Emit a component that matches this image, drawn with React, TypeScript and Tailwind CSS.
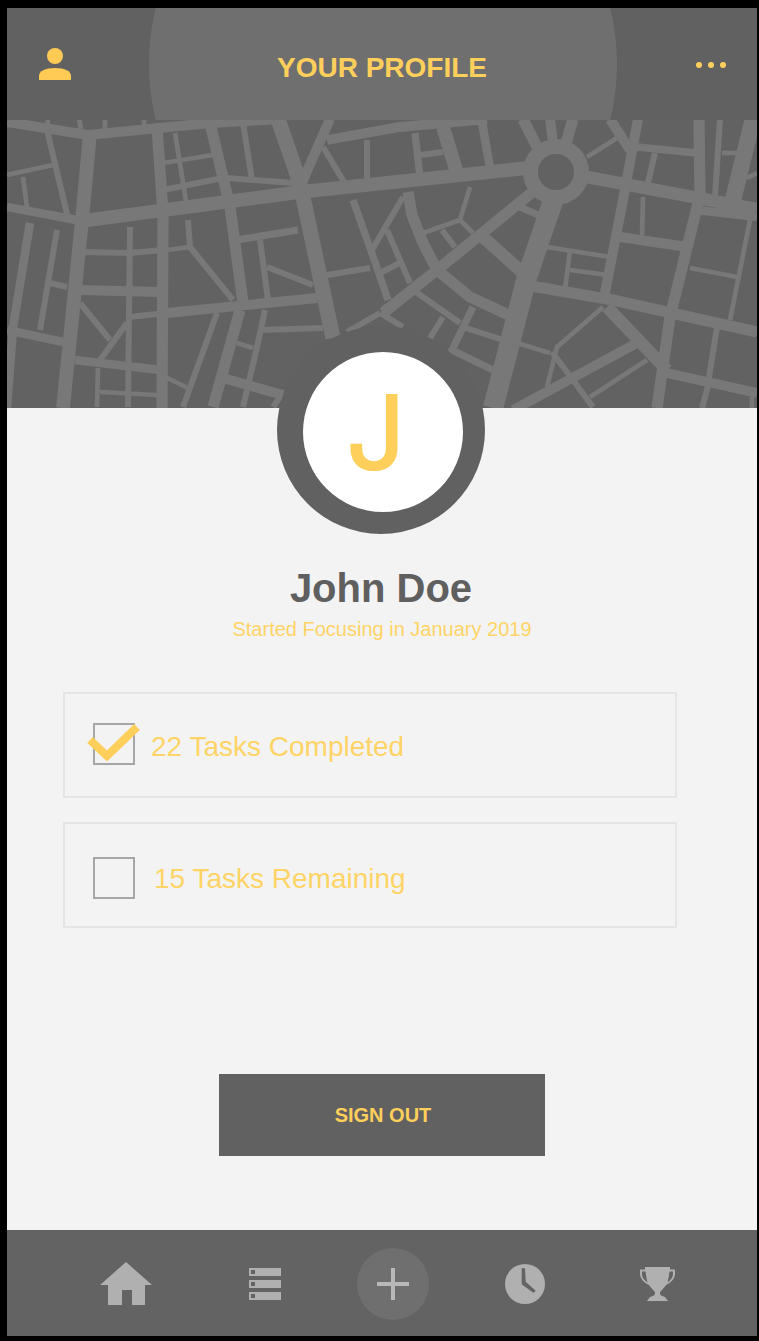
const ROADS: [string, number][] = [
  // top left blocks
  ['7,122 88,135 210,123 285,119', 7],
  ['90,133 82,220 63,408', 10],
  ['47,130 68,218', 4],
  ['7,175 53,165', 3],
  ['23,177 27,208', 3],
  ['7,207 82,221', 6],
  ['48,119 47,127', 3],
  ['79,119 81,129', 3],
  ['105,119 105,129', 3],
  ['144,119 144,127', 3],
  ['157,127 163,213 162,408', 8],
  ['210,123 230,207 243,303', 8],
  ['243,123 252,180', 4],
  ['227,178 293,183', 4],
  ['278,119 300,183 333,338', 11],
  ['330,119 300,187', 7],
  ['323,147 347,187', 4],
  ['327,140 400,127 487,119', 7],
  ['367,140 367,187', 4],
  ['175,133 187,207', 3],
  ['163,163 213,155', 3],
  ['163,190 223,178', 4],
  ['353,200 375,262 388,300', 5],
  // main east-west road
  ['82,221 300,192 537,167', 10],
  ['587,177 757,209', 9],
  // lower left
  ['30,223 13,327 7,408', 6],
  ['57,230 40,330', 4],
  ['50,283 67,287', 4],
  ['7,330 63,342', 6],
  ['83,252 130,253 163,250', 4],
  ['130,227 128,407', 4],
  ['80,290 160,292', 7],
  ['167,250 190,247', 3],
  ['188,220 190,247 233,300', 4],
  ['128,317 167,313', 4],
  ['167,313 317,298', 7],
  ['80,303 110,340', 4],
  ['127,323 100,360', 4],
  ['75,360 160,370', 6],
  ['98,368 97,407', 3],
  ['100,392 157,395', 3],
  ['165,377 188,388', 3],
  ['217,313 183,407', 4],
  ['240,310 213,407', 8],
  ['237,240 298,230', 5],
  ['260,240 268,300', 4],
  ['267,267 313,285', 4],
  ['327,275 370,268', 4],
  ['265,310 257,347 243,407', 4],
  ['260,330 323,328', 4],
  ['237,343 253,348', 3],
  ['223,378 283,395', 7],
  ['283,393 273,407', 4],
  ['347,332 380,313', 4],
  // centre
  ['408,192 412,215 423,243 437,270 470,297 513,317', 8],
  ['535,190 437,270 383,313', 8],
  ['483,237 523,273', 9],
  ['555,195 527,277 493,408', 15],
  ['387,230 410,283', 4],
  ['380,273 400,263', 4],
  ['423,233 460,220 473,233', 3],
  ['442,230 455,247', 4],
  ['460,220 470,187', 3],
  ['413,290 460,323', 4],
  ['443,317 430,338', 4],
  ['473,307 452,350 493,370', 5],
  ['463,327 503,340', 4],
  ['380,313 403,327', 4],
  ['403,197 372,250', 4],
  ['520,207 545,218', 5],
  ['415,133 420,177', 5],
  ['420,155 443,152', 4],
  ['443,127 457,173', 10],
  ['482,122 490,168', 6],
  // roundabout spokes
  ['523,119 537,147', 8],
  ['550,119 553,143', 7],
  ['573,119 565,147', 8],
  ['587,157 617,138', 3],
  ['610,119 630,150', 7],
  // right side
  ['517,343 550,353', 3],
  ['547,247 610,257', 3],
  ['570,250 565,290', 3],
  ['570,270 607,275', 3],
  ['525,285 613,300 757,332', 8],
  ['638,119 623,200 603,303', 7],
  ['603,307 557,347 547,387', 3],
  ['607,307 667,370', 9],
  ['552,352 593,407', 4],
  ['637,343 513,410', 7],
  ['647,360 590,397', 3],
  ['643,197 642,237', 3],
  ['620,237 687,247', 7],
  ['700,195 670,317 657,408', 8],
  ['690,268 737,277', 3],
  ['750,220 730,320', 3],
  ['697,210 757,217', 6],
  ['717,327 707,390 702,408', 4],
  ['667,373 757,393', 7],
  ['752,397 752,408', 3],
  ['637,147 697,153', 5],
  ['655,153 647,187', 4],
  ['699,119 700,195', 8],
  ['720,119 715,197', 4],
  ['722,153 738,153', 3],
  ['753,119 733,200', 12],
  ['747,178 757,173', 3],
];

function CityMap() {
  return (
    <svg viewBox="7 120 750 288" className="block h-[288px] w-[750px]">
      <rect x="7" y="120" width="750" height="288" fill="#626262" />
      {ROADS.map(([points, width]) => (
        <polyline key={points} points={points} fill="none" stroke="#787878" strokeWidth={width * 1.3 + 0.8} />
      ))}
      <circle cx="556" cy="172" r="25.5" fill="none" stroke="#787878" strokeWidth="15" />
    </svg>
  );
}

function TaskRow({ checked, label, textClass }: { checked?: boolean; label: string; textClass: string }) {
  return (
    <div className={`flex h-[106px] w-[614px] border-2 border-[#e5e5e5] pl-[28px] ${checked ? 'pt-[29px]' : 'pt-[33px]'}`}>
      <div className="relative h-[42px] w-[42px] shrink-0 border-2 border-[#a6a6a6]">
        {checked && (
          <svg viewBox="0 0 54 42" className="absolute -left-[8px] -top-[2px] h-[42px] w-[54px]">
            <path d="M3 17 L20 33 L50 4" fill="none" stroke="#ffcf5c" strokeWidth="8" />
          </svg>
        )}
      </div>
      <span className={`text-[28px] leading-[42px] text-[#ffd466] ${textClass}`}>{label}</span>
    </div>
  );
}

export default function App() {
  return (
    <div className="h-[1341px] w-[759px] bg-black pl-[7px] pt-[8px] font-['Liberation_Sans',Arial,sans-serif]">
      <div className="flex h-[1328px] w-[750px] flex-col bg-[#f3f3f3]">
        <header className="relative flex h-[112px] shrink-0 justify-between overflow-hidden bg-[#616161] pl-[32px] pr-[31px] pt-[40px]">
          <div className="absolute -top-[178px] left-[142px] h-[468px] w-[468px] rounded-full bg-[#6f6f6f]" />
          <svg viewBox="0 0 32 32" className="relative h-[32px] w-[32px]">
            <circle cx="16" cy="8" r="8" fill="#ffcb55" />
            <path d="M0 32 V28 C0 23 6 20 16 20 C26 20 32 23 32 28 V32 Z" fill="#ffcb55" />
          </svg>
          <h1 className="relative -ml-[3px] text-[28px] font-bold leading-[40px] text-[#ffcf5c]">YOUR PROFILE</h1>
          <div className="relative mt-[14px] flex gap-[6px]">
            <span className="h-[6px] w-[6px] rounded-full bg-[#ffcf5c]" />
            <span className="h-[6px] w-[6px] rounded-full bg-[#ffcf5c]" />
            <span className="h-[6px] w-[6px] rounded-full bg-[#ffcf5c]" />
          </div>
        </header>

        <div className="relative shrink-0">
          <CityMap />
          <div className="absolute left-[270px] top-[206px] h-[208px] w-[208px] rounded-full bg-[#616161]">
            <div className="absolute left-[26px] top-[26px] flex h-[160px] w-[160px] items-center justify-center rounded-full bg-white pr-[14px] font-['Inter',sans-serif] text-[104px] font-medium leading-none text-[#ffcf5c]">
              J
            </div>
          </div>
        </div>

        <main className="flex flex-1 flex-col">
          <h2 className="mt-[157px] pr-[2px] text-center text-[40px] font-bold leading-[46px] text-[#5f5f5f]">John Doe</h2>
          <p className="mt-[6px] text-center text-[20px] leading-[24px] text-[#ffd466]">Started Focusing in January 2019</p>
          <div className="ml-[56px] mt-[51px] flex flex-col gap-[24px]">
            <TaskRow checked label="22 Tasks Completed" textClass="ml-[16px] mt-[3px]" />
            <TaskRow label="15 Tasks Remaining" textClass="ml-[19px] mt-[1px]" />
          </div>
          <button className="ml-[212px] mt-[146px] h-[82px] w-[326px] bg-[#616161] pl-[2px] text-[20px] font-bold text-[#ffcf5c]">
            SIGN OUT
          </button>
        </main>

        <nav className="flex h-[106px] shrink-0 items-center bg-[#636363] pl-[93px] pt-[2px]">
          <svg viewBox="0 0 52 44" className="h-[44px] w-[52px]">
            <path d="M26 0 L52 23 H45 V43 H32 V28 H22 V43 H8 V23 H0 Z" fill="#b0b0b0" />
          </svg>
          <div className="ml-[97px] flex w-[32px] flex-col gap-[4px]">
            {[0, 1, 2].map((i) => (
              <div key={i} className="flex h-[8px] items-center bg-[#b0b0b0] pl-[2px]">
                <div className="h-[4px] w-[4px] bg-[#636363]" />
              </div>
            ))}
          </div>
          <div className="relative ml-[76px] flex h-[72px] w-[72px] items-center justify-center rounded-full bg-[#6f6f6f]">
            <div className="h-[4px] w-[32px] bg-[#b8b8b8]" />
            <div className="absolute h-[32px] w-[4px] bg-[#b8b8b8]" />
          </div>
          <svg viewBox="0 0 40 40" className="ml-[76px] h-[40px] w-[40px]">
            <circle cx="20" cy="20" r="20" fill="#b0b0b0" />
            <path d="M16.7 4.3 H20 L20.7 17.7 L30.7 26.7 L28.3 28.7 L16.7 20.3 Z" fill="#636363" />
          </svg>
          <svg viewBox="0 0 35 34" className="ml-[95px] h-[34px] w-[35px]">
            <path
              d="M5 0 H30 V2.5 H35 V7 C35 12 30 16 26 18 C24 21 21 24 20 25 V27 C20 28 22 29 25 30 L28 34 H7 L10 30 C13 29 15 28 15 27 V25 C14 24 11 21 9 18 C5 16 0 12 0 7 V2.5 H5 Z M2 4.5 V7 C2 10 4 13 7.5 15.5 C6.5 12 6 8 5.5 4.5 Z M33 4.5 V7 C33 10 31 13 27.5 15.5 C28.5 12 29 8 29.5 4.5 Z"
              fill="#b0b0b0"
              fillRule="evenodd"
            />
          </svg>
        </nav>
      </div>
    </div>
  );
}
